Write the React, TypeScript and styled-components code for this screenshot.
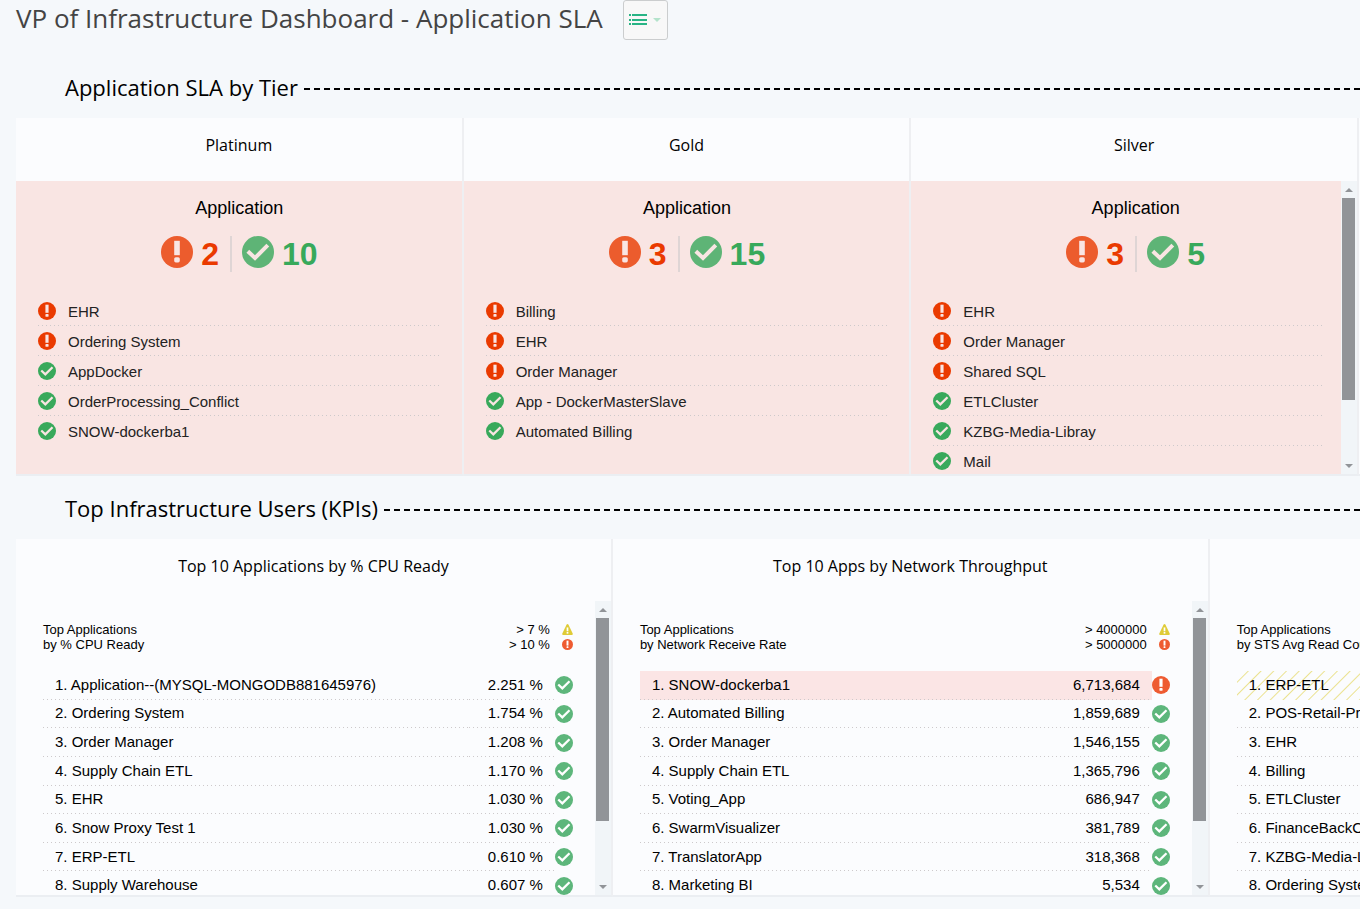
import React from 'react';
import styled, { createGlobalStyle, css } from 'styled-components';

const SANS = '"Liberation Sans", Arial, sans-serif';
const HEADING = '"Open Sans", "Noto Sans", sans-serif';
const RED = '#ea3a00';
const GREEN = '#38a95b';
const PINK = '#f9e5e3';
const PANEL = '#fbfcfe';

const GlobalStyle = createGlobalStyle`
  *, *::before, *::after { box-sizing: border-box; }
  body {
    margin: 0;
    background: #f5f8fb;
    color: #000;
    font-family: ${SANS};
  }
`;

const Page = styled.main`
  min-height: 100vh;
  overflow: hidden;
  padding: 0 1px 12px 16px;
`;

const TopBar = styled.header`
  display: flex;
  align-items: center;
  gap: 20px;
  height: 40px;
`;

const PageTitle = styled.h1`
  margin: 0;
  color: #444;
  font: 400 26px/36px ${HEADING};
  height: 40px;
`;

const MenuButton = styled.button`
  display: flex;
  align-items: center;
  gap: 6px;
  width: 45px;
  height: 40px;
  padding: 0 5px;
  border: 1px solid #cbcdce;
  border-radius: 3px;
  background: #f8f8f8;
`;

const SectionHeading = styled.div<{ $top: number }>`
  display: flex;
  align-items: center;
  gap: 6px;
  margin: ${(p) => p.$top}px -1px 14px 49px;
`;

const SectionTitle = styled.h2`
  margin: 0;
  height: 30px;
  font: 400 22px/26px ${HEADING};
`;

const DashedRule = styled.div`
  flex: 1;
  height: 2px;
  background: repeating-linear-gradient(to right, #000 0 6px, transparent 6px 10px);
`;

const Board = styled.div<{ $column: string }>`
  display: grid;
  grid-auto-flow: column;
  grid-auto-columns: ${(p) => p.$column};
`;

const Panel = styled.section`
  display: flex;
  flex-direction: column;
  min-width: 0;
  background: ${PANEL};
  border-right: 2px solid #eeeff2;
  border-bottom: 2px solid #ebeef2;
`;

const PanelTitle = styled.h3<{ $height: number }>`
  margin: 0;
  height: ${(p) => p.$height}px;
  text-align: center;
  font: 400 16px/55px ${HEADING};
`;

const PanelBody = styled.div<{ $height: number; $alert?: boolean }>`
  display: flex;
  height: ${(p) => p.$height}px;
  overflow: hidden;
  background: ${(p) => (p.$alert ? PINK : PANEL)};
`;

const Track = styled.div`
  display: flex;
  flex-direction: column;
  align-items: center;
  flex: 0 0 16px;
  background: #f1f5f8;
`;

const Thumb = styled.div`
  width: 13px;
  height: 69%;
  background: #919498;
`;

const Arrow = styled.span<{ $down?: boolean }>`
  display: flex;
  justify-content: center;
  width: 16px;
  height: 17px;
  padding-top: 7px;
  margin-top: ${(p) => (p.$down ? 'auto' : '0')};
`;

const TierContent = styled.div<{ $scrolls?: boolean }>`
  flex: 1;
  min-width: 0;
  padding: 14px ${(p) => (p.$scrolls ? 19 : 21)}px 0 22px;
`;

const Summary = styled.div<{ $scrolls?: boolean }>`
  margin-right: ${(p) => (p.$scrolls ? -16 : 0)}px;
`;

const SummaryTitle = styled.h4`
  margin: 0;
  text-align: center;
  font: 400 18px/26px ${SANS};
`;

const Counts = styled.div`
  display: flex;
  justify-content: center;
  margin: 15px 0 24px;
`;

const Count = styled.div<{ $color: string }>`
  display: flex;
  gap: 8px;
  height: 36px;
  color: ${(p) => p.$color};
  font: 700 32px/36px ${SANS};

  & + & {
    margin-left: 11px;
    padding-left: 10px;
    border-left: 2px solid #dfd5d5;
  }
`;

const dottedBase = css`
  background-image: linear-gradient(to right, #cdc9cb 0 1px, transparent 1px);
  background-repeat: repeat-x;
  background-position: left bottom;
  background-size: 4px 1px;
`;

const AppList = styled.ul`
  margin: 0;
  padding: 0;
  list-style: none;
`;

const AppItem = styled.li`
  display: flex;
  align-items: center;
  gap: 12px;
  height: 30px;
  color: #222;
  font-size: 15px;

  &:not(:last-child) { ${dottedBase} }
`;

const KpiContent = styled.div`
  flex: 1;
  min-width: 0;
  padding: 21px 22px 0 27px;
`;

const Legend = styled.div`
  display: flex;
  justify-content: space-between;
  margin-bottom: 19px;
  font-size: 13px;
  line-height: 15px;
  white-space: nowrap;
`;

const Thresholds = styled.div`
  text-align: right;
`;

const Threshold = styled.div`
  display: flex;
  align-items: center;
  justify-content: flex-end;
  gap: 12px;
`;

const KpiTable = styled.table`
  width: 100%;
  height: 229px;
  border-collapse: collapse;
  font-size: 15px;
  white-space: nowrap;
`;

type Tone = 'ok' | 'alert' | 'warn';

const KpiRow = styled.tr<{ $tone: Tone; $last: boolean }>`
  td { padding: 0; }
  td:not(:last-child) {
    padding-bottom: 2px;
    ${(p) => !p.$last && dottedBase}
    ${(p) => p.$tone === 'alert' && 'background-color: #fbe5e5;'}
  }
  ${(p) =>
    p.$tone === 'warn' &&
    css`
      td:first-child {
        background: repeating-linear-gradient(135deg, #fbfcfe 0 7px, #ebe28f 8px, #fbfcfe 9px);
      }
    `}
  td:first-child { padding-left: 12px; }
  td:nth-child(2) { padding-right: 12px; text-align: right; }
  td:last-child { width: 18px; }
  td svg { display: block; }
`;

interface IconProps {
  size: number;
  color?: string;
  glyph?: string;
  opacity?: number;
}

function AlertIcon({ size, color = RED, glyph = PINK, opacity = 1 }: IconProps) {
  return (
    <svg width={size} height={size} viewBox="0 0 32 32" opacity={opacity} aria-hidden="true">
      <circle cx="16" cy="16" r="16" fill={color} />
      <rect x="13.2" y="4.8" width="5.6" height="14.4" fill={glyph} />
      <rect x="13.2" y="21.2" width="5.6" height="5.2" rx="1.6" fill={glyph} />
    </svg>
  );
}

function CheckIcon({ size, color = GREEN, glyph = PINK, opacity = 1 }: IconProps) {
  return (
    <svg width={size} height={size} viewBox="0 0 32 32" opacity={opacity} aria-hidden="true">
      <circle cx="16" cy="16" r="16" fill={color} />
      <path d="M5.8 15.2 L13 22 L25.8 9.2" fill="none" stroke={glyph} strokeWidth="4" />
    </svg>
  );
}

function WarnIcon() {
  return (
    <svg width="11" height="11" viewBox="0 0 32 32" aria-hidden="true">
      <path d="M13.5 1.5 Q16 -1 18.5 1.5 L31.5 28 Q32 32 28 32 L4 32 Q0 32 0.5 28 Z" fill="#dfcb36" />
      <rect x="13.5" y="10" width="5" height="11" fill="#fff" />
      <rect x="13.5" y="23" width="5" height="5" fill="#fff" />
    </svg>
  );
}

function Scrollbar() {
  return (
    <Track aria-hidden="true">
      <Arrow>
        <svg width="8" height="4" viewBox="0 0 8 4"><path d="M0 4 L4 0 L8 4 Z" fill="#919498" /></svg>
      </Arrow>
      <Thumb />
      <Arrow $down>
        <svg width="8" height="4" viewBox="0 0 8 4"><path d="M0 0 L8 0 L4 4 Z" fill="#919498" /></svg>
      </Arrow>
    </Track>
  );
}

interface Tier {
  name: string;
  alerts: string[];
  healthy: string[];
  alertCount: number;
  okCount: number;
  scrolls?: boolean;
}

const tiers: Tier[] = [
  {
    name: 'Platinum',
    alertCount: 2,
    okCount: 10,
    alerts: ['EHR', 'Ordering System'],
    healthy: ['AppDocker', 'OrderProcessing_Conflict', 'SNOW-dockerba1'],
  },
  {
    name: 'Gold',
    alertCount: 3,
    okCount: 15,
    alerts: ['Billing', 'EHR', 'Order Manager'],
    healthy: ['App - DockerMasterSlave', 'Automated Billing'],
  },
  {
    name: 'Silver',
    alertCount: 3,
    okCount: 5,
    alerts: ['EHR', 'Order Manager', 'Shared SQL'],
    healthy: ['ETLCluster', 'KZBG-Media-Libray', 'Mail'],
    scrolls: true,
  },
];

interface Kpi {
  title: string;
  metric: string;
  warn: string;
  alert: string;
  firstTone: Tone;
  rows: [string, string][];
}

const kpis: Kpi[] = [
  {
    title: 'Top 10 Applications by % CPU Ready',
    metric: 'by % CPU Ready',
    warn: '> 7 %',
    alert: '> 10 %',
    firstTone: 'ok',
    rows: [
      ['Application--(MYSQL-MONGODB881645976)', '2.251 %'],
      ['Ordering System', '1.754 %'],
      ['Order Manager', '1.208 %'],
      ['Supply Chain ETL', '1.170 %'],
      ['EHR', '1.030 %'],
      ['Snow Proxy Test 1', '1.030 %'],
      ['ERP-ETL', '0.610 %'],
      ['Supply Warehouse', '0.607 %'],
    ],
  },
  {
    title: 'Top 10 Apps by Network Throughput',
    metric: 'by Network Receive Rate',
    warn: '> 4000000',
    alert: '> 5000000',
    firstTone: 'alert',
    rows: [
      ['SNOW-dockerba1', '6,713,684'],
      ['Automated Billing', '1,859,689'],
      ['Order Manager', '1,546,155'],
      ['Supply Chain ETL', '1,365,796'],
      ['Voting_App', '686,947'],
      ['SwarmVisualizer', '381,789'],
      ['TranslatorApp', '318,368'],
      ['Marketing BI', '5,534'],
    ],
  },
  {
    title: '',
    metric: 'by STS Avg Read Count',
    warn: '',
    alert: '',
    firstTone: 'warn',
    rows: [
      ['ERP-ETL', ''],
      ['POS-Retail-Prod', ''],
      ['EHR', ''],
      ['Billing', ''],
      ['ETLCluster', ''],
      ['FinanceBackOffice', ''],
      ['KZBG-Media-Libray', ''],
      ['Ordering System', ''],
    ],
  },
];

function TierPanel({ tier }: { tier: Tier }) {
  return (
    <Panel>
      <PanelTitle $height={63}>{tier.name}</PanelTitle>
      <PanelBody $height={293} $alert>
        <TierContent $scrolls={tier.scrolls}>
          <Summary $scrolls={tier.scrolls}>
            <SummaryTitle>Application</SummaryTitle>
            <Counts>
              <Count $color={RED}>
                <AlertIcon size={32} opacity={0.8} />
                {tier.alertCount}
              </Count>
              <Count $color={GREEN}>
                <CheckIcon size={32} opacity={0.8} />
                {tier.okCount}
              </Count>
            </Counts>
          </Summary>
          <AppList>
            {tier.alerts.map((app) => (
              <AppItem key={app}><AlertIcon size={18} />{app}</AppItem>
            ))}
            {tier.healthy.map((app) => (
              <AppItem key={app}><CheckIcon size={18} />{app}</AppItem>
            ))}
          </AppList>
        </TierContent>
        {tier.scrolls && <Scrollbar />}
      </PanelBody>
    </Panel>
  );
}

function KpiPanel({ kpi }: { kpi: Kpi }) {
  return (
    <Panel>
      <PanelTitle $height={62}>{kpi.title}</PanelTitle>
      <PanelBody $height={294}>
        <KpiContent>
          <Legend>
            <div>Top Applications<br />{kpi.metric}</div>
            <Thresholds>
              <Threshold>{kpi.warn}<WarnIcon /></Threshold>
              <Threshold>{kpi.alert}<AlertIcon size={11} glyph="#fff" color="#ee5b31" /></Threshold>
            </Thresholds>
          </Legend>
          <KpiTable>
            <tbody>
              {kpi.rows.map(([name, value], i) => {
                const tone = i === 0 ? kpi.firstTone : 'ok';
                return (
                  <KpiRow key={name} $tone={tone} $last={i === kpi.rows.length - 1}>
                    <td>{i + 1}. {name}</td>
                    <td>{value}</td>
                    <td>
                      {tone === 'alert'
                        ? <AlertIcon size={18} glyph="#fff" color="#ee5b31" />
                        : <CheckIcon size={18} glyph="#fff" color="#5db67b" />}
                    </td>
                  </KpiRow>
                );
              })}
            </tbody>
          </KpiTable>
        </KpiContent>
        <Scrollbar />
      </PanelBody>
    </Panel>
  );
}

export default function App() {
  return (
    <Page>
      <GlobalStyle />
      <TopBar>
        <PageTitle>VP of Infrastructure Dashboard - Application SLA</PageTitle>
        <MenuButton type="button" aria-label="Dashboard list">
          <svg width="18" height="12" viewBox="0 0 18 12" fill="#28b485" aria-hidden="true">
            <path d="M0 0h2v2H0zM3 0h15v2H3zM0 5h2v2H0zM3 5h15v2H3zM0 9h2v2H0zM3 9h15v2H3z" />
          </svg>
          <svg width="8" height="5" viewBox="0 0 8 5" fill="#b4e3cb" aria-hidden="true">
            <path d="M0 0h8L4 4z" />
          </svg>
        </MenuButton>
      </TopBar>

      <SectionHeading $top={34}>
        <SectionTitle>Application SLA by Tier</SectionTitle>
        <DashedRule />
      </SectionHeading>
      <Board $column="calc(100% / 3)">
        {tiers.map((tier) => <TierPanel key={tier.name} tier={tier} />)}
        <Panel />
      </Board>

      <SectionHeading $top={19}>
        <SectionTitle>Top Infrastructure Users (KPIs)</SectionTitle>
        <DashedRule />
      </SectionHeading>
      <Board $column="calc(400% / 9)">
        {kpis.map((kpi) => <KpiPanel key={kpi.metric} kpi={kpi} />)}
      </Board>
    </Page>
  );
}
